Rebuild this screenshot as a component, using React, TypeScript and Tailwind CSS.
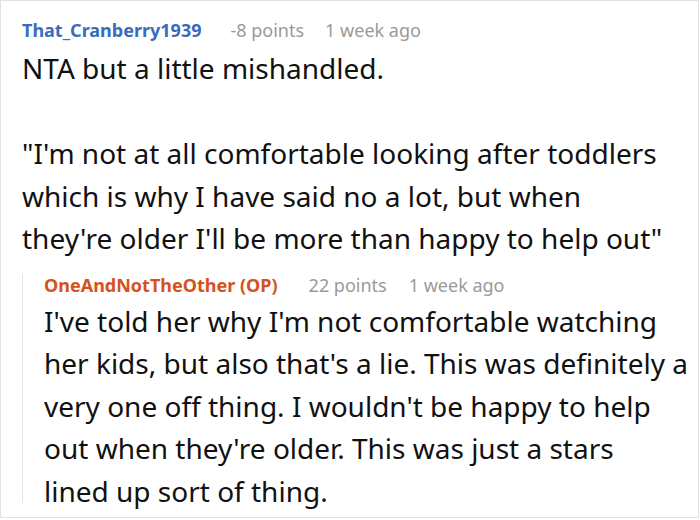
const font = { fontFamily: '"Noto Sans", "Open Sans", sans-serif' };

function Meta({ name, color, points, time, gap, gap2 }: { name: string; color: string; points: string; time: string; gap: string; gap2: string }) {
  return (
    <div className="flex items-center text-[18px] leading-[22px] whitespace-nowrap">
      <span className={`font-bold ${color}`}>{name}</span>
      <span className={`text-[#9a9a9a] ${gap}`}>{points}</span>
      <span className={`text-[#9a9a9a] ${gap2}`}>{time}</span>
    </div>
  );
}

export default function App() {
  return (
    <div
      className="w-[699px] h-[518px] border border-[#e2e2e2] bg-white text-[#111] overflow-hidden"
      style={font}
    >
      <div className="pl-[21px] pt-[18px]">
        <Meta name="That_Cranberry1939" color="text-[#3a6cbd]" points="-8 points" time="1 week ago" gap="ml-[29px]" gap2="ml-[21px]" />
        <div className="mt-[6px] text-[28px] leading-[42.5px] whitespace-nowrap">
          <p>NTA but a little mishandled.</p>
          <p className="mt-[42.5px]">
            "I'm not at all comfortable looking after toddlers
            <br />
            which is why I have said no a lot, but when
            <br />
            they're older I'll be more than happy to help out"
          </p>
        </div>
        <div className="mt-[14px] flex">
          <div className="w-px bg-[#e4e4e4] mb-[9px]" />
          <div className="pl-[21px]">
            <Meta name="OneAndNotTheOther (OP)" color="text-[#d5521c]" points="22 points" time="1 week ago" gap="ml-[31px]" gap2="ml-[22px]" />
            <p className="mt-[4px] text-[28px] leading-[42.5px] whitespace-nowrap">
              I've told her why I'm not comfortable watching
              <br />
              her kids, but also that's a lie. This was definitely a
              <br />
              very one off thing. I wouldn't be happy to help
              <br />
              out when they're older. This was just a stars
              <br />
              lined up sort of thing.
            </p>
          </div>
        </div>
      </div>
    </div>
  );
}
